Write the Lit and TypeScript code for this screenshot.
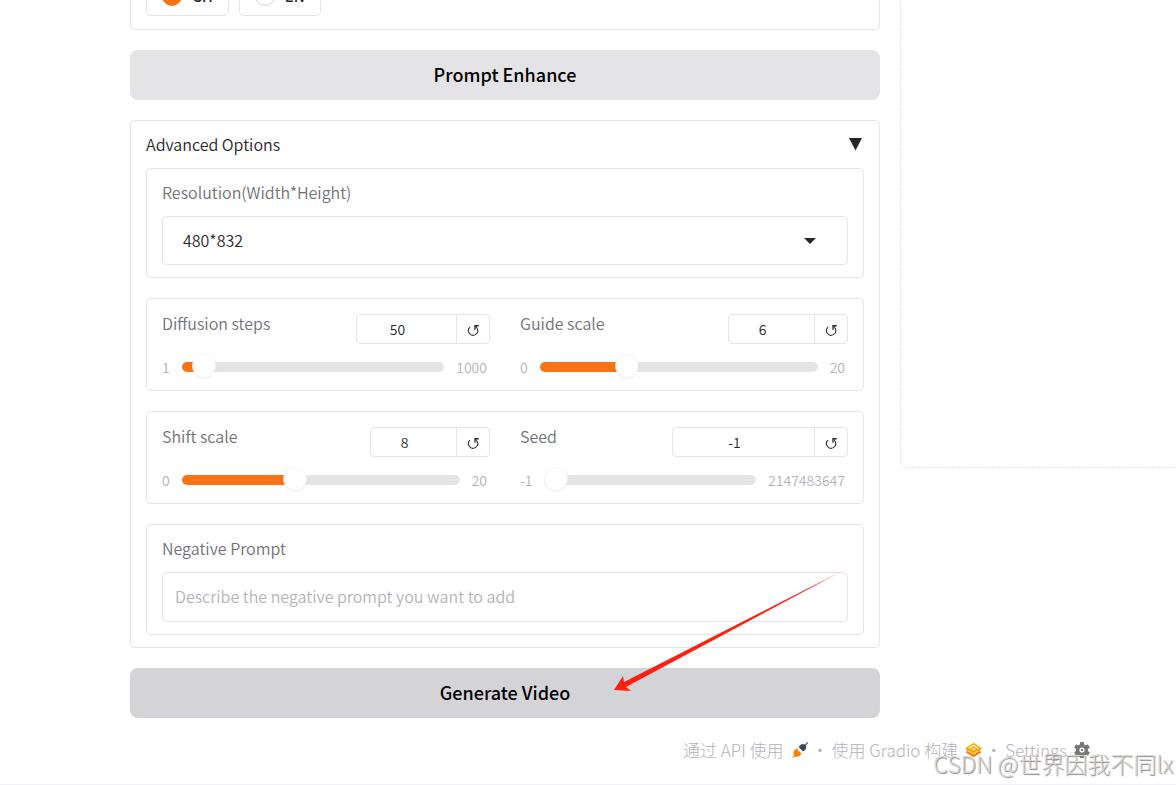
import { LitElement, html, css } from "lit";
import { customElement, property, state } from "lit/decorators.js";

const shared = css`
  * {
    box-sizing: border-box;
  }
  button,
  input,
  select,
  textarea {
    font: inherit;
    color: inherit;
    margin: 0;
  }
`;

@customElement("slider-field")
export class SliderField extends LitElement {
  @property() label = "";
  @property({ type: Number }) min = 0;
  @property({ type: Number }) max = 100;
  @property({ type: Number }) value = 0;
  @property({ type: Number }) initial = 0;

  static styles = [
    shared,
    css`
      :host {
        display: block;
        min-width: 0;
      }
      .head {
        display: flex;
        justify-content: space-between;
        align-items: flex-start;
      }
      .label {
        line-height: 18px;
        color: #71717a;
      }
      .box {
        display: flex;
        height: 30px;
        border: 1px solid #e4e4e7;
        border-radius: 4px;
        font-size: 14px;
        color: #27272a;
      }
      .number {
        min-width: 0;
        padding: 0 18px 0 0;
        border: 0;
        background: none;
        text-align: center;
        outline: none;
        appearance: textfield;
      }
      .number::-webkit-inner-spin-button {
        appearance: none;
        margin: 0;
      }
      .reset {
        display: flex;
        align-items: center;
        justify-content: center;
        width: 33px;
        padding: 2px 0 0;
        border: 0;
        border-left: 1px solid #e4e4e7;
        background: none;
        cursor: pointer;
      }
      .row {
        display: flex;
        align-items: center;
        gap: 12px;
        height: 22px;
        margin-top: 12px;
        padding-right: 3px;
        font-size: 14px;
        color: #b3b3bb;
      }
      .range {
        flex: 1;
        min-width: 0;
        height: 22px;
        appearance: none;
        background: none;
        outline: none;
      }
      .range::-webkit-slider-runnable-track {
        height: 10px;
        border-radius: 5px;
        background: linear-gradient(
          to right,
          #f97316 var(--fill),
          #e4e4e7 var(--fill)
        );
      }
      .range::-webkit-slider-thumb {
        appearance: none;
        width: 22px;
        height: 22px;
        margin-top: -7px;
        border-radius: 50%;
        background: #fff;
        box-shadow: 0 0 0 1px rgba(244, 244, 246, 0.8),
          0 1px 3px rgba(0, 0, 0, 0.1);
      }
    `,
  ];

  private change(e: Event) {
    this.value = Number((e.target as HTMLInputElement).value);
  }

  render() {
    const part = (this.value - this.min) / (this.max - this.min);
    const boxWidth = 71 + String(this.max).length * 7;
    return html`
      <div class="head">
        <label class="label" for="number">${this.label}</label>
        <div class="box">
          <input
            class="number"
            id="number"
            type="number"
            style="width:${boxWidth}px"
            min=${this.min}
            max=${this.max}
            .value=${String(this.value)}
            @change=${this.change}
          />
          <button
            class="reset"
            aria-label="Reset to default value"
            @click=${() => (this.value = this.initial)}
          >
            <svg width="13" height="13" viewBox="0 0 14 14" fill="none" stroke="currentColor">
              <path d="M3.2 3.4A5 5 0 1 0 11.2 5.2Q10.500 3.200 8.800 2.300" stroke-width="1.100" />
              <path d="M12.600 1.900H8.600V6.200" stroke-width="1.400" />
            </svg>
          </button>
        </div>
      </div>
      <div class="row">
        <span>${this.min}</span>
        <input
          class="range"
          type="range"
          aria-label=${this.label}
          style="--fill:calc(11px + (100% - 22px) * ${part})"
          min=${this.min}
          max=${this.max}
          .value=${String(this.value)}
          @input=${this.change}
        />
        <span>${this.max}</span>
      </div>
    `;
  }
}

@customElement("app-root")
export class AppRoot extends LitElement {
  @state() private open = true;

  static styles = [
    shared,
    css`
      :host {
        display: block;
        position: relative;
        overflow: hidden;
        background: #fff;
        border-bottom: 1px solid #f1f1f3;
        font-family: "Noto Sans CJK SC", "Noto Sans", sans-serif;
        font-size: 16px;
        font-weight: 350;
        line-height: 24px;
        color: #27272a;
      }
      .columns {
        display: grid;
        grid-template-columns: minmax(0, 750fr) minmax(0, 276fr);
        align-items: start;
        gap: 20px;
        margin-top: -60px;
        padding-left: 130px;
      }
      .left {
        position: relative;
        display: grid;
        gap: 20px;
      }
      .card {
        margin: 0;
        padding: 15px;
        border: 1px solid #e4e4e7;
        border-radius: 5px;
      }
      .language {
        display: flex;
        align-items: flex-end;
        gap: 10px;
        height: 90px;
        padding-bottom: 13px;
      }
      .choice {
        display: flex;
        align-items: center;
        gap: 10px;
        height: 40px;
        padding: 0 15px;
        border: 1px solid #e4e4e7;
        border-radius: 5px;
        font-size: 15px;
        font-weight: 500;
      }
      .radio {
        appearance: none;
        width: 20px;
        height: 20px;
        border: 1px solid #d4d4d8;
        border-radius: 50%;
      }
      .radio:checked {
        border: 6px solid #f97316;
        background: #fff;
      }
      .action {
        height: 50px;
        padding: 0 0 2px;
        border: 0;
        border-radius: 8px;
        background: #e4e4e7;
        color: #000;
        font-size: 18px;
        font-weight: 500;
        cursor: pointer;
      }
      .pressed {
        background: #d4d4d8;
      }
      .options {
        padding: 12px 15px;
      }
      .toggle {
        display: flex;
        align-items: center;
        justify-content: space-between;
        width: 100%;
        height: 22px;
        margin-bottom: 13px;
        padding: 0 2px 0 0;
        border: 0;
        background: none;
        cursor: pointer;
      }
      .stack {
        display: grid;
        gap: 20px;
      }
      .field {
        display: grid;
        gap: 13px;
        padding: 12px 15px;
      }
      .label {
        line-height: 22px;
        color: #71717a;
      }
      .picker {
        display: grid;
        align-items: center;
      }
      .picker > * {
        grid-area: 1 / 1;
      }
      .select,
      .text {
        width: 100%;
        height: 49px;
        border: 1px solid #e4e4e7;
        border-radius: 5px;
        background: none;
        outline: none;
      }
      .select {
        appearance: none;
        padding: 0 20px 2px;
      }
      .caret {
        justify-self: end;
        margin-right: 32px;
        pointer-events: none;
      }
      .text {
        display: block;
        height: 50px;
        padding: 11px 12px;
        resize: none;
        overflow: hidden;
      }
      .text::placeholder {
        color: #b3b3bb;
      }
      .pair {
        display: grid;
        grid-template-columns: minmax(0, 1fr) minmax(0, 1fr);
        gap: 30px;
        padding-bottom: 12px;
      }
      .output {
        height: 528px;
        border: 1px dashed #e4e4e7;
        border-width: 0 0 1px 1px;
        border-bottom-left-radius: 5px;
      }
      .arrow {
        position: absolute;
        right: 30px;
        bottom: 24px;
        pointer-events: none;
      }
      .footer {
        display: flex;
        align-items: center;
        justify-content: flex-end;
        gap: 3px;
        margin-top: 20px;
        padding: 0 86px 22px 0;
        color: #b3b3bb;
        font-size: 17px;
        font-weight: 300;
      }
      .link {
        display: flex;
        align-items: center;
        gap: 7px;
        color: inherit;
        text-decoration: none;
      }
      .watermark {
        position: absolute;
        right: 3px;
        bottom: 5px;
        font-size: 23px;
        line-height: 32px;
        font-weight: 300;
        color: rgba(215, 215, 215, 0.9);
        text-shadow: 1px 1px 1px #888;
        white-space: nowrap;
        pointer-events: none;
      }
    `,
  ];

  render() {
    return html`
      <main class="columns">
        <section class="left">
          <div class="card language" role="radiogroup" aria-label="Language">
            <label class="choice"><input class="radio" type="radio" name="lang" checked />CH</label>
            <label class="choice"><input class="radio" type="radio" name="lang" />EN</label>
          </div>
          <button class="action">Prompt Enhance</button>
          <div class="card options">
            <button
              class="toggle"
              aria-expanded=${this.open}
              @click=${() => (this.open = !this.open)}
            >
              <span>Advanced Options</span>
              <svg width="13" height="13" viewBox="0 0 13 13"><path d="M0 0H13L6.500 12.500Z" fill="#27272a" /></svg>
            </button>
            <div class="stack" ?hidden=${!this.open}>
              <div class="card field">
                <label class="label" for="resolution">Resolution(Width*Height)</label>
                <div class="picker">
                  <select class="select" id="resolution">
                    <option>480*832</option>
                  </select>
                  <svg class="caret" width="12" height="6" viewBox="0 0 12 6"><path d="M0 0H12L6 6Z" fill="#27272a" /></svg>
                </div>
              </div>
              <div class="card pair">
                <slider-field label="Diffusion steps" min="1" max="1000" value="50" initial="50"></slider-field>
                <slider-field label="Guide scale" min="0" max="20" value="6" initial="6"></slider-field>
              </div>
              <div class="card pair">
                <slider-field label="Shift scale" min="0" max="20" value="8" initial="8"></slider-field>
                <slider-field label="Seed" min="-1" max="2147483647" value="-1" initial="-1"></slider-field>
              </div>
              <div class="card field">
                <label class="label" for="negative">Negative Prompt</label>
                <textarea
                  class="text"
                  id="negative"
                  rows="1"
                  placeholder="Describe the negative prompt you want to add"
                ></textarea>
              </div>
            </div>
          </div>
          <button class="action pressed">Generate Video</button>
          <svg class="arrow" width="236" height="126" viewBox="0 0 236 126">
            <defs>
              <linearGradient id="fade" x1="0" x2="1" y1="0" y2="0">
                <stop offset="0.850" stop-color="#ff2010" />
                <stop offset="1" stop-color="#ff2010" stop-opacity="0.200" />
              </linearGradient>
            </defs>
            <path d="M0 122L9 108L10 114L234 0L12 119L17 123Z" fill="url(#fade)" />
          </svg>
        </section>
        <section class="output" aria-label="Output"></section>
      </main>
      <footer class="footer">
        <a class="link" href="#api">
          通过 API 使用
          <svg width="18" height="18" viewBox="0 0 18 18">
            <path d="M1 17L3 14Q1.500 10 4.500 8.500L6 7.500L7.500 9L6.500 10.500L8 10L10.500 12.500L9.500 14Q7.500 16.500 4 15.500Z" fill="#ff7c00" />
            <path d="M16.500 1L14 3.500Q10.500 2 8.500 5L7.500 6L12 10.500L13.500 9.500Q16 7.500 14.800 4.200L17 2Z" fill="#3c4963" />
          </svg>
        </a>
        <span>·</span>
        <a class="link" href="#gradio">
          使用 Gradio 构建
          <svg width="17" height="16" viewBox="0 0 17 16">
            <path d="M1.500 9.500L8.500 14L15.500 9.500" fill="none" stroke="#ff7c00" stroke-width="2.200" />
            <path d="M8.500 1.800L15.300 6.200L8.500 10.800L1.700 6.200Z" fill="#fff" stroke="#ffb800" stroke-width="1.800" />
            <path d="M1.200 6.400L4 8.200M15.800 6.400L13 8.200" stroke="#ff9500" stroke-width="1.800" />
            <path d="M5 7.400L8.500 5.200L12 7.400L8.500 9.600Z" fill="#fff3d0" stroke="#ff9d00" stroke-width="1.500" />
          </svg>
        </a>
        <span>·</span>
        <a class="link" href="#settings">
          Settings
          <svg width="16" height="16" viewBox="0 0 16 16">
            <g fill="#777">
              <rect x="6" y="0" width="4" height="16" rx="0.500" />
              <rect x="6" y="0" width="4" height="16" rx="0.500" transform="rotate(60 8 8)" />
              <rect x="6" y="0" width="4" height="16" rx="0.500" transform="rotate(120 8 8)" />
              <circle cx="8" cy="8" r="6" />
            </g>
            <circle cx="8" cy="8" r="2.600" fill="#fff" />
            <circle cx="8" cy="8" r="1.200" fill="#777" />
          </svg>
        </a>
      </footer>
      <div class="watermark">CSDN @世界因我不同lx</div>
    `;
  }
}
